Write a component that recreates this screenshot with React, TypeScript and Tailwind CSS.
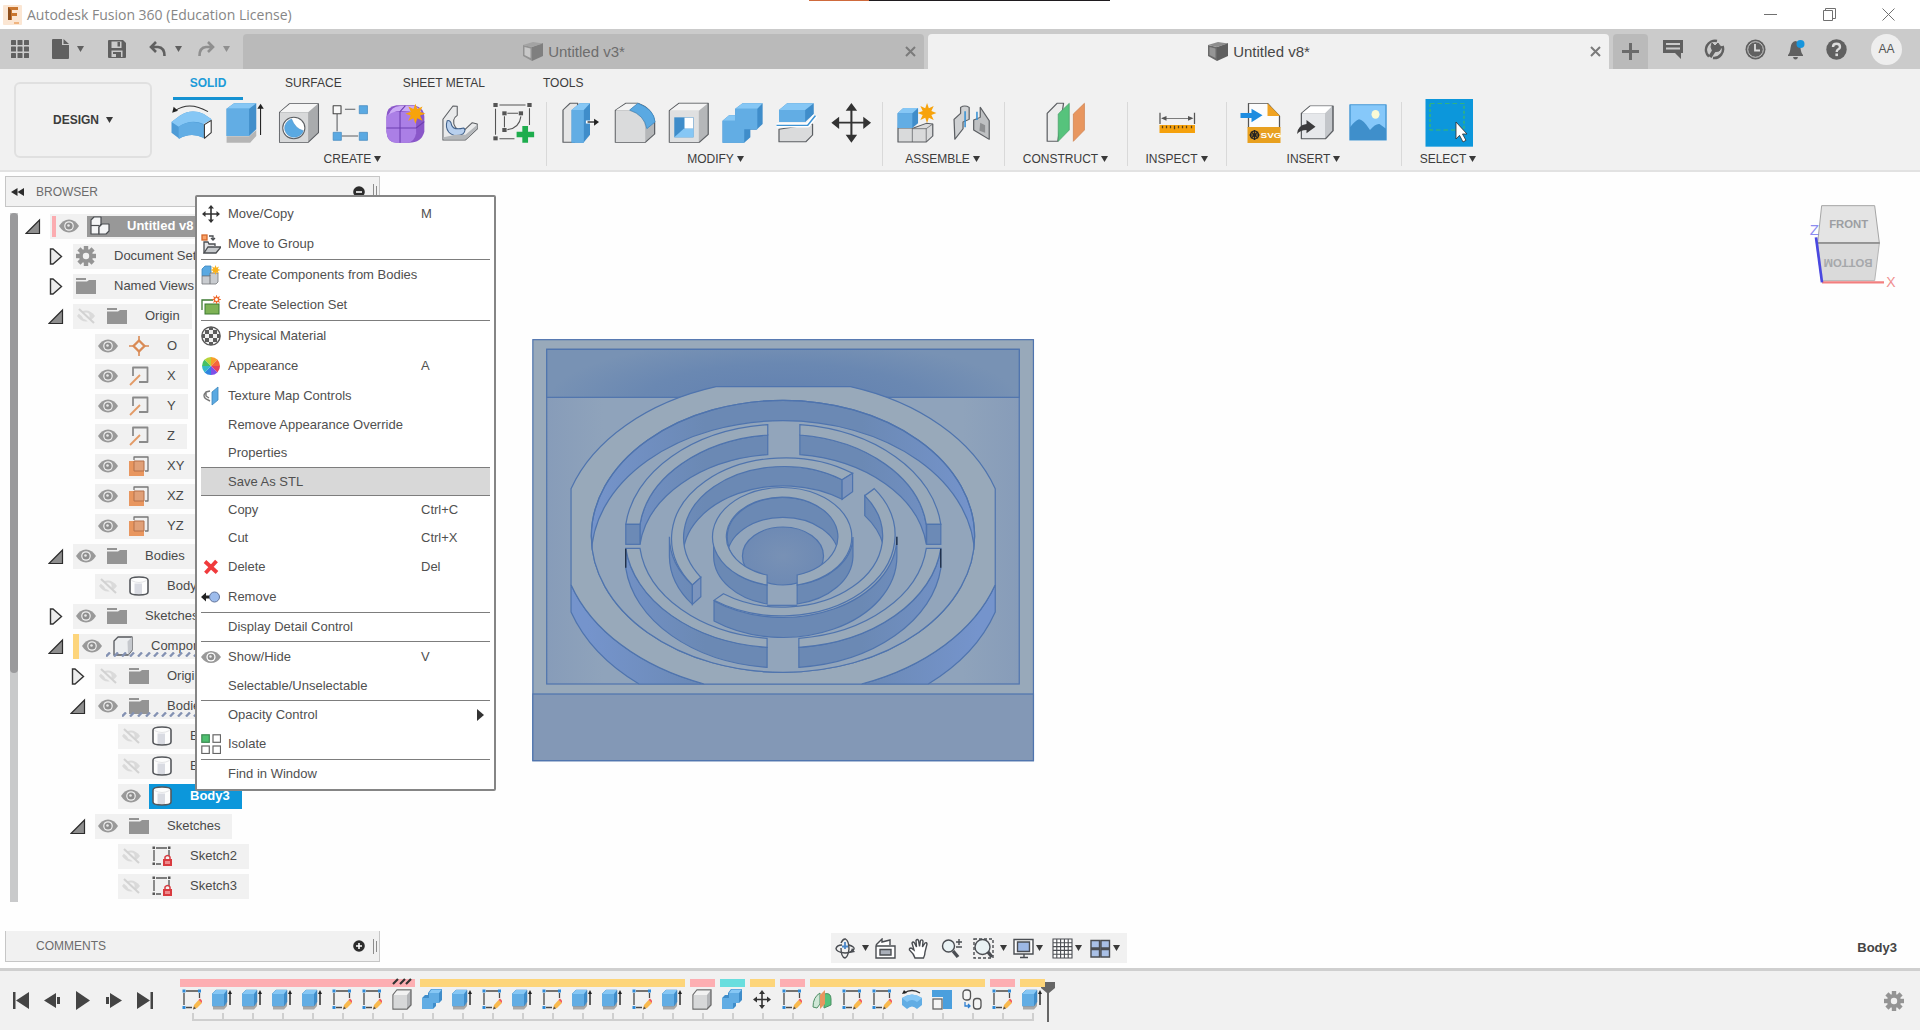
import type { ReactNode } from "react";

const ARIAL = "font-['Liberation_Sans',Arial,sans-serif]";

function Caret({ className = "text-[#3a3a3a]" }: { className?: string }) {
  return (
    <svg viewBox="0 0 7 6" className={`h-[6px] w-[7px] shrink-0 ${className}`} aria-hidden="true">
      <path d="M0 0H7L3.500 6Z" fill="currentColor" />
    </svg>
  );
}

/* ---------- title bar ---------- */

function TitleBar() {
  return (
    <header className="relative flex h-[29px] items-center bg-white pl-[3px]">
      <div className="absolute left-[809px] top-0 flex h-px w-[301px]">
        <span className="w-[60px] bg-[#cf6a3c]" />
        <span className="flex-1 bg-[#1f1b1f]" />
      </div>
      <svg viewBox="0 0 19 20" className="h-5 w-[19px]" aria-hidden="true">
        <rect width="19" height="20" rx="1" fill="#fbe6d3" />
        <path d="M5 2H15V5H9V8H14V11H9V15H5Z" fill="#c9762f" />
        <path d="M5 2L8 5V15H5Z" fill="#8f4f1d" />
        <path d="M11 17H16V19H11Z" fill="#f0b47f" />
      </svg>
      <h1 className="ml-[5px] font-['Open_Sans','Noto_Sans',sans-serif] text-[14px] leading-5 font-normal text-[#868686]">
        Autodesk Fusion 360 (Education License)
      </h1>
      <div className="ml-auto flex items-center gap-[46px] pr-[25px] text-[#707070]">
        <button aria-label="Minimize" className="h-[13px] w-[13px]">
          <svg viewBox="0 0 13 13" className="h-[13px] w-[13px]"><path d="M0 6.500H13" stroke="currentColor" /></svg>
        </button>
        <button aria-label="Restore" className="h-[13px] w-[13px]">
          <svg viewBox="0 0 13 13" className="h-[13px] w-[13px]" fill="none" stroke="currentColor">
            <path d="M.5 2.500H9.500V12.500H.5ZM2.500 2.500V.5H12.500V10.500H9.500" />
          </svg>
        </button>
        <button aria-label="Close window" className="h-[13px] w-[13px]">
          <svg viewBox="0 0 13 13" className="h-[13px] w-[13px]" stroke="currentColor"><path d="M.5 .5L12.500 12.500M12.500 .5L.5 12.500" /></svg>
        </button>
      </div>
    </header>
  );
}

/* ---------- application bar ---------- */

function TabCube({ muted }: { muted?: boolean }) {
  return (
    <svg viewBox="0 0 20 19" className="h-[19px] w-5" aria-hidden="true">
      <path d="M9 5L20 1V14L9 19Z" fill={muted ? "#7f7f7f" : "#5f5f5f"} />
      <path d="M0 3L9 5V19L0 14Z" fill={muted ? "#929292" : "#6a6a6a"} />
      <path d="M1.500 5L7.500 6.500V16L1.500 13Z" fill={muted ? "#c8c8c8" : "#959595"} />
      <path d="M0 3L10 0L20 1.500L9 5Z" fill={muted ? "#a3a3a3" : "#8d8d8d"} />
    </svg>
  );
}

function CloseX() {
  return (
    <svg viewBox="0 0 11 11" className="h-[11px] w-[11px]" stroke="#7b7b7b" strokeWidth="2">
      <path d="M1 1L10 10M10 1L1 10" />
    </svg>
  );
}

function AppBar() {
  return (
    <div className="flex h-10 bg-[#cbcbcb]">
      <div className="flex w-[243px] shrink-0 items-center pl-[11px] text-[#606060]">
        <button aria-label="Data panel">
          <svg viewBox="0 0 18 18" className="h-[18px] w-[18px]" fill="currentColor">
            {[0, 6.5, 13].map((y) => [0, 6.5, 13].map((x) => <rect key={`${x}-${y}`} x={x} y={y} width="5" height="5" rx=".6" />))}
          </svg>
        </button>
        <button aria-label="File" className="ml-[23px] flex items-center gap-2">
          <svg viewBox="0 0 17 20" className="h-5 w-[17px]" fill="currentColor">
            <path d="M0 1Q0 0 1 0H10V6H17V19Q17 20 16 20H1Q0 20 0 19ZM11.500 0L17 5H11.500Z" />
          </svg>
          <Caret className="text-[#606060]" />
        </button>
        <button aria-label="Save" className="ml-6">
          <svg viewBox="0 0 18 18" className="h-[18px] w-[18px]">
            <path d="M0 1Q0 0 1 0H15L18 3V17Q18 18 17 18H1Q0 18 0 17Z" fill="#606060" />
            <path d="M3.500 1.500H13.500V8H3.500ZM3.500 10.500H14.500V17H3.500Z" fill="#cbcbcb" />
            <path d="M9.500 2V6.500H12V2ZM5 12H13V17H8V14H5Z" fill="#606060" />
          </svg>
        </button>
        <button aria-label="Undo" className="ml-[23px] flex items-center gap-[9px]">
          <svg viewBox="0 0 17 17" className="h-[17px] w-[17px]" fill="none" stroke="currentColor" strokeWidth="2.600">
            <path d="M7 1L2 6L7 11M2 6H9Q15.500 6.500 15.500 15" />
          </svg>
          <Caret className="text-[#606060]" />
        </button>
        <button aria-label="Redo" className="ml-4 flex items-center gap-2 text-[#8f8f8f]">
          <svg viewBox="0 0 17 17" className="h-[17px] w-[17px]" fill="none" stroke="currentColor" strokeWidth="2.600">
            <path d="M10 1L15 6L10 11M15 6H8Q1.500 6.500 1.500 15" />
          </svg>
          <Caret className="text-[#8f8f8f]" />
        </button>
      </div>
      <div className="mt-[5px] flex flex-1 gap-1 text-[15px] leading-5">
        <div className="flex flex-1 items-center rounded-t bg-[#bababa] pr-2 text-[#6d6d6d]">
          <button className="flex flex-1 items-center justify-center gap-[5px]">
            <TabCube muted />
            Untitled v3*
          </button>
          <button aria-label="Close Untitled v3"><CloseX /></button>
        </div>
        <div className="flex flex-1 items-center rounded-t bg-[#f1f1f1] pr-2 text-[#474747]">
          <button className="flex flex-1 items-center justify-center gap-[5px]">
            <TabCube />
            Untitled v8*
          </button>
          <button aria-label="Close Untitled v8"><CloseX /></button>
        </div>
      </div>
      <button aria-label="New tab" className="mt-[5px] ml-1 grid w-[35px] place-items-center rounded-t bg-[#bababa]">
        <svg viewBox="0 0 17 17" className="h-[17px] w-[17px]" stroke="#6b6b6b" strokeWidth="3"><path d="M8.500 0V17M0 8.500H17" /></svg>
      </button>
      <div className="flex items-center gap-5 pr-[18px] pl-[14px] text-[#606060]">
        <button aria-label="Notes">
          <svg viewBox="0 0 22 20" className="h-5 w-[22px]"><path d="M1 1H21V14H19V20L13 14H1Z" fill="currentColor" /><path d="M4 5H18M4 9.500H18" stroke="#cbcbcb" strokeWidth="1.800" /></svg>
        </button>
        <button aria-label="Extensions">
          <svg viewBox="0 0 21 21" className="h-[21px] w-[21px]" fill="none" stroke="currentColor">
            <path d="M13 2A9 9 0 0 0 5 17.500M9 19A9 9 0 0 0 18.500 7" strokeWidth="2.500" />
            <path d="M6 18L11 10" strokeWidth="3.500" />
            <path d="M7 8L8 4L11 7L14 4L16 7L18 8L15 12L9 13Z" fill="currentColor" strokeWidth="1" />
          </svg>
        </button>
        <button aria-label="Job status">
          <svg viewBox="0 0 21 21" className="h-[21px] w-[21px]">
            <circle cx="10.500" cy="10.500" r="10" fill="currentColor" />
            <circle cx="10.500" cy="10.500" r="7.800" fill="none" stroke="#cbcbcb" />
            <path d="M10 5V11.500H15" fill="none" stroke="#dcdcdc" strokeWidth="1.800" />
          </svg>
        </button>
        <button aria-label="Notifications">
          <svg viewBox="0 0 20 21" className="h-[21px] w-5">
            <path d="M2 16Q4 14 4.500 9Q5 3 9.500 2Q14 3 14.500 9Q15 14 17 16V17H2ZM7 18H12Q11.500 20.500 9.500 20.500T7 18Z" fill="currentColor" />
            <circle cx="14.500" cy="5" r="4" fill="#1795dc" />
          </svg>
        </button>
        <button aria-label="Help">
          <svg viewBox="0 0 21 21" className="h-[21px] w-[21px]">
            <circle cx="10.500" cy="10.500" r="10.200" fill="currentColor" />
            <path d="M7 8Q7 4.800 10.500 4.800T14 8Q14 9.500 12 10.500Q10.700 11.300 10.700 13" fill="none" stroke="#dcdcdc" strokeWidth="2.400" />
            <rect x="9.400" y="14.500" width="2.600" height="2.600" fill="#dcdcdc" />
          </svg>
        </button>
        <button aria-label="Account" className="ml-1 grid h-[31px] w-[31px] place-items-center rounded-full bg-[#eee] text-[12px] leading-4 text-[#555]">
          AA
        </button>
      </div>
    </div>
  );
}

/* ---------- ribbon ---------- */

const EDGE = "#5c5f63";

function Tool({ label, vb, children }: { label: string; vb: string; children: ReactNode }) {
  return (
    <button aria-label={label} className="h-12 w-[54px] shrink-0">
      <svg viewBox={vb} preserveAspectRatio="none" className="h-12 w-[54px]" strokeLinejoin="round">
        {children}
      </svg>
    </button>
  );
}

function Star({ x, y, rx = 28, ry = 30, fill = "#f7a30b" }: { x: number; y: number; rx?: number; ry?: number; fill?: string }) {
  const pts = Array.from({ length: 16 }, (_, i) => {
    const k = i % 2 ? 0.5 : 1;
    const a = (i * Math.PI) / 8;
    return `${(x + rx * k * Math.sin(a)).toFixed(1)},${(y - ry * k * Math.cos(a)).toFixed(1)}`;
  }).join(" ");
  return <polygon points={pts} fill={fill} />;
}

const createTools = (
  <>
    <Tool label="Revolve" vb="459 297 151 144">
      <path d="M480 366L502 348Q535 325 570 342L592 358L570 370L570 414Q535 395 502 416L480 398Z" fill="#4d9bd6" />
      <path d="M480 366L502 348Q535 325 570 342L592 358L570 372Q535 355 500 380Z" fill="#86c7f5" />
      <path d="M500 380Q535 356 570 374V413Q535 395 500 416Z" fill="#62ade4" />
      <path d="M572 374L591 361V398L572 415Z" fill="#fff" stroke="#333" strokeWidth="3" />
      <path d="M490 332Q530 302 582 335" fill="none" stroke="#333" strokeWidth="3" />
      <path d="M482 338L486 320L498 332Z" fill="#222" />
    </Tool>
    <Tool label="Extrude" vb="610 297 151 144">
      <path d="M634 409H697L717 390V408L700 428H634Z" fill="#b5b5b5" />
      <path d="M634 326L655 310H717V388L697 408H634Z" fill="#418fcb" />
      <path d="M634 326L655 310H717L697 326Z" fill="#86c7f5" />
      <path d="M634 326H697V408H634Z" fill="#62ade4" />
      <path d="M729 405V318" stroke="#222" strokeWidth="3" />
      <path d="M720 326L729 311L738 326Z" fill="#222" />
    </Tool>
    <Tool label="Hole" vb="761 297 151 144">
      <path d="M782 337L810 311H891V398L862 427H782Z" fill="#a9abad" stroke={EDGE} strokeWidth="3" />
      <path d="M783 337L811 312H889L862 337Z" fill="#f6f6f6" />
      <path d="M783 338H862V426H783Z" fill="#d8d9da" />
      <ellipse cx="822" cy="384" rx="31" ry="32" fill="#fff" stroke={EDGE} strokeWidth="3" />
      <path d="M816 357A27 28 0 1 0 849 392Q826 386 816 357Z" fill="#5aa9e2" stroke="#3b7fb5" />
    </Tool>
    <Tool label="Pattern" vb="912 297 151 144">
      <path d="M965 328H994M956 408H1002M943 342V394" fill="none" stroke={EDGE} strokeWidth="3" />
      <rect x="932" y="317" width="22" height="24" fill="#f8f8f8" stroke="#444" strokeWidth="3" />
      <rect x="1005" y="317" width="23" height="24" fill="#5aa9e2" stroke="#3e86bd" strokeWidth="2" />
      <rect x="932" y="397" width="23" height="24" fill="#5aa9e2" stroke="#3e86bd" strokeWidth="2" />
      <rect x="1005" y="397" width="23" height="24" fill="#5aa9e2" stroke="#3e86bd" strokeWidth="2" />
    </Tool>
    <Tool label="Create form" vb="1064 297 151 144">
      <path d="M1082 350Q1082 320 1110 316H1160Q1188 325 1188 350V395Q1180 428 1145 428H1110Q1084 428 1082 395Z" fill="#8a57c9" />
      <path d="M1082 352Q1085 335 1110 335H1140Q1165 335 1165 360V400Q1160 428 1140 428H1108Q1084 426 1082 395Z" fill="#ab7fe6" />
      <path d="M1088 345Q1095 320 1120 318H1160Q1175 325 1180 335L1160 340Q1150 332 1120 333Q1100 334 1088 345Z" fill="#cbaaf5" />
      <path d="M1082 384H1165L1188 365M1120 428V335L1135 317" fill="none" stroke="#6d3eb0" strokeWidth="3" />
      <Star x={1163} y={341} />
    </Tool>
    <Tool label="Flange" vb="1215 297 151 144">
      <path d="M1240 358L1268 318L1280 319V346Q1262 358 1275 382Q1290 400 1302 388L1322 368L1336 372V387L1303 420H1240Z" fill="#e9eaeb" stroke={EDGE} strokeWidth="3" />
      <path d="M1252 362Q1262 360 1264 375Q1270 392 1298 384Q1306 390 1296 402Q1272 414 1256 396Q1246 382 1252 362Z" fill="#b8d0ee" stroke="#41618b" strokeWidth="3" />
      <path d="M1240 418H1303L1336 385V374L1303 404H1275L1242 412Z" fill="#b4b7ba" />
    </Tool>
    <Tool label="Create sketch" vb="1366 297 151 144">
      <path d="M1398 315H1471M1482 325V375M1387 326V404M1398 416H1440" fill="none" stroke="#555" strokeWidth="3" />
      <path d="M1420 340H1450M1412 349V382M1458 349Q1454 384 1420 389" fill="none" stroke="#555" strokeWidth="3" />
      {[[1387, 315], [1482, 315], [1387, 415], [1412, 340], [1458, 340], [1412, 390]].map(([x, y]) => (
        <rect key={`${x}-${y}`} x={x - 6} y={y - 6} width="12" height="12" fill="#555" />
      ))}
      <path d="M1462 378H1478V395H1495V412H1478V428H1462V412H1446V395H1462Z" fill="#1ead4d" />
    </Tool>
  </>
);

const modifyTools = (
  <>
    <Tool label="Press pull" vb="34 297 132 144">
      <path d="M56 330L73 310H92L84 427H56Z" fill="#e6e6e6" stroke={EDGE} strokeWidth="3" />
      <path d="M77 330L97 310H122V404L106 428H77Z" fill="#3f8dca" />
      <path d="M77 330H107V428H77Z" fill="#62ade4" />
      <path d="M77 330L97 310H122L107 330Z" fill="#86c7f5" />
      <path d="M112 366H136" stroke="#fff" strokeWidth="9" />
      <path d="M116 366H136" stroke="#222" strokeWidth="4" />
      <path d="M132 356L144 366L132 377Z" fill="#222" />
    </Tool>
    <Tool label="Fillet" vb="167 297 132 144">
      <path d="M185 331L210 310H240Q275 325 281 365V402L258 427H185Z" fill="#b5b7b9" stroke={EDGE} strokeWidth="3" />
      <path d="M186 331L211 311H242Q225 320 220 331Z" fill="#f4f4f4" />
      <path d="M186 332H218Q258 345 258 388V426H186Z" fill="#dadbdc" />
      <path d="M220 330L240 310Q280 328 282 366L262 386Q256 345 220 330Z" fill="#5aa9e2" stroke="#3e86bd" strokeWidth="2" />
    </Tool>
    <Tool label="Shell" vb="299 297 132 144">
      <path d="M317 332L340 310H412V403L390 427H317Z" fill="#b5b7b9" stroke={EDGE} strokeWidth="3" />
      <path d="M318 332L341 311H410L389 332Z" fill="#f4f4f4" />
      <path d="M318 333H389V426H318Z" fill="#dfe0e1" />
      <path d="M329 352H376V412H329Z" fill="#3f8dca" />
      <path d="M354 353H375V386H354Z" fill="#fff" />
      <path d="M329 412L352 386H376V412Z" fill="#86c7f5" />
    </Tool>
    <Tool label="Combine" vb="431 297 132 144">
      <path d="M447 362L463 346H478V326L496 310H545V372L530 389H515V412L500 428H447Z" fill="#3f8dca" />
      <path d="M447 362H478V326H532V388H500V428H447Z" fill="#62ade4" />
      <path d="M447 362L463 346H478V362ZM478 326L496 310H545L532 326Z" fill="#86c7f5" />
    </Tool>
    <Tool label="Split body" vb="564 297 132 144">
      <path d="M586 330L606 310H671V342L650 366H586Z" fill="#3f8dca" />
      <path d="M586 330H650V366H586Z" fill="#62ade4" />
      <path d="M586 330L606 310H671L650 330Z" fill="#86c7f5" />
      <path d="M586 388L668 372V405L652 425H586Z" fill="#dadbdc" stroke={EDGE} strokeWidth="3" />
      <path d="M580 376H656L675 347" fill="none" stroke="#fff" strokeWidth="13" />
      <path d="M580 376H656L675 347" fill="none" stroke="#3f94d4" strokeWidth="4" />
    </Tool>
    <Tool label="Move" vb="693 297 132 144">
      <path d="M760 320V418M722 368H797" stroke="#333" strokeWidth="5" />
      <path d="M746 332L760 309L774 332ZM746 404L760 428L774 404ZM730 350L711 368L730 387ZM789 350L808 368L789 387Z" fill="#333" />
    </Tool>
  </>
);

const assembleTools = (
  <>
    <Tool label="New component" vb="855 297 132 144">
      <path d="M877 384V426H946L962 408V372L946 370L915 384Z" fill="#d9dadb" stroke={EDGE} strokeWidth="3" />
      <path d="M912 384V426M912 386H946V426M946 386L962 372" fill="none" stroke={EDGE} strokeWidth="2" />
      <path d="M876 340L890 324H926V370L912 384H876Z" fill="#3f8dca" />
      <path d="M876 340H912V384H876Z" fill="#62ade4" />
      <path d="M876 340L890 324H926L912 340Z" fill="#86c7f5" />
      <Star x={948} y={339} rx={23} />
    </Tool>
    <Tool label="Joint" vb="987 297 132 144">
      <path d="M1014 358L1030 340V322Q1040 314 1051 322V358L1036 366V386L1016 418Z" fill="#cfd1d3" stroke={EDGE} strokeWidth="3" />
      <path d="M1100 362L1078 322V352L1062 360V390L1100 418Z" fill="#bfc1c3" stroke={EDGE} strokeWidth="3" />
      <path d="M1078 368L1090 376V398L1076 392Z" fill="#8d8f91" />
      <path d="M1041 334V382M1070 335V360" stroke="#3f94d4" strokeWidth="4" />
    </Tool>
  </>
);

const constructTools = (
  <Tool label="Offset plane" vb="1224 297 132 144">
    <path d="M1244 340L1268 310H1284L1270 424H1244Z" fill="#ececec" stroke={EDGE} strokeWidth="3" />
    <path d="M1271 342L1298 310V390L1271 424Z" fill="#56c37c" stroke="#4aa169" strokeWidth="2" />
    <path d="M1308 342L1335 310V390L1308 424Z" fill="#e8965f" stroke="#cf8250" strokeWidth="2" />
  </Tool>
);

const inspectTools = (
  <Tool label="Measure" vb="21 297 108 144">
    <path d="M41 338V372M110 338V372M46 355H105" stroke="#555" strokeWidth="2.500" />
    <path d="M43 355L54 348V362ZM108 355L97 348V362Z" fill="#555" />
    <rect x="40" y="375" width="71" height="24" fill="#f5a10c" />
    <path d="M46 377V385M54 377V385M62 377V385M70 377V388M78 377V385M86 377V385M94 377V385M104 377V385" stroke="#59421a" strokeWidth="2.500" />
  </Tool>
);

const insertTools = (
  <>
    <Tool label="Insert SVG" vb="189 297 108 144">
      <path d="M220 310H258L282 348V384H220Z" fill="#fcfcfc" stroke="#555" strokeWidth="2.500" />
      <path d="M258 310L283 348H258Z" fill="#f0a322" />
      <rect x="218" y="381" width="66" height="48" fill="#e8a01f" />
      <path d="M204 339H226V326L248 346L226 367V354H204Z" fill="#1e8ce0" />
      <g stroke="#222" strokeWidth="3" fill="none">
        <ellipse cx="232" cy="405" rx="8" ry="12" />
        <path d="M232 390V420M222 405H242M225 395L239 415M239 395L225 415" />
      </g>
      <text x="244" y="413" fontFamily="Liberation Sans, sans-serif" fontWeight="bold" fontSize="20" fill="#fff">SVG</text>
    </Tool>
    <Tool label="Derive" vb="297 297 108 144">
      <path d="M326 340L343 318H389V392L374 416H326Z" fill="#c3c6ca" stroke={EDGE} strokeWidth="3" />
      <path d="M327 340L344 319H387L373 340Z" fill="#fff" />
      <path d="M327 341H373V414H327Z" fill="#e6e8eb" />
      <path d="M317 402Q318 376 336 372V360L354 380L336 400V390Q324 390 317 402Z" fill="#3b3b3d" />
    </Tool>
    <Tool label="Canvas" vb="405 297 108 144">
      <rect x="423" y="314" width="72" height="106" fill="#86c8fa" stroke="#4b9bd6" strokeWidth="3" />
      <path d="M423 382Q433 362 441 358Q449 358 463 390Q474 370 482 372L495 386V420H423Z" fill="#3f8fcb" />
      <ellipse cx="474" cy="343" rx="8" ry="13" fill="#fbfbd6" />
    </Tool>
  </>
);

const selectTools = (
  <Tool label="Select" vb="566 297 108 144">
    <rect x="573" y="297" width="95" height="143" fill="#0c97db" />
    <rect x="582" y="310" width="68" height="80" fill="none" stroke="#3dba66" strokeWidth="2.500" strokeDasharray="9 6" />
    <path d="M634 366V417L641 406L648 426L654 421L647 402H656Z" fill="#fff" stroke="#333" strokeWidth="2" />
  </Tool>
);

function Group({ name, className, tools }: { name: string; className: string; tools: ReactNode }) {
  return (
    <section className={`flex h-[70px] flex-col items-center ${className}`}>
      <div className="flex h-12">{tools}</div>
      <button className="mt-1 flex items-center gap-[3px] pr-px text-[12px] leading-4">
        {name}
        <Caret />
      </button>
    </section>
  );
}

function Divider() {
  return <span className="mt-[3px] h-16 w-px shrink-0 bg-[#d9d9d9]" />;
}

function Ribbon() {
  return (
    <div className="flex h-[103px] shrink-0 border-b-2 border-[#e2e2e2] bg-[#f1f1f1] text-[#3c3c3c]">
      <button className="mt-[13px] ml-[14px] flex h-[76px] w-[138px] shrink-0 items-center justify-center gap-[7px] rounded-md border-2 border-[#e0e0e0] text-[12px] leading-4 font-bold">
        DESIGN
        <Caret />
      </button>
      <div className="ml-3">
        <nav className="flex h-[30px] text-[12px] leading-4">
          <button className="ml-[9px] h-[31px] w-[70px] border-b-3 border-[#1592d2] font-bold text-[#1c9bd8]">SOLID</button>
          <button className="ml-[42px] h-[28px]">SURFACE</button>
          <button className="ml-[61px] h-[28px]">SHEET METAL</button>
          <button className="ml-[58px] h-[28px]">TOOLS</button>
        </nav>
        <div className="flex">
          <Group name="CREATE" className="w-[382px] pr-1" tools={createTools} />
          <Divider />
          <Group name="MODIFY" className="w-[335px] pr-1 pl-[7px]" tools={modifyTools} />
          <Divider />
          <Group name="ASSEMBLE" className="w-[121px] pr-px" tools={assembleTools} />
          <Divider />
          <Group name="CONSTRUCT" className="w-[122px]" tools={constructTools} />
          <Divider />
          <Group name="INSPECT" className="w-[98px]" tools={inspectTools} />
          <Divider />
          <Group name="INSERT" className="w-[174px]" tools={insertTools} />
          <Divider />
          <Group name="SELECT" className="w-[93px]" tools={selectTools} />
        </div>
      </div>
    </div>
  );
}

/* ---------- browser tree ---------- */

function Eye() {
  return (
    <svg viewBox="0 0 20 14" className="h-[14px] w-5 shrink-0" aria-hidden="true">
      <path d="M0 7Q4 .5 10 .5T20 7Q16 13.500 10 13.500T0 7Z" fill="#999" />
      <circle cx="10" cy="7" r="4.800" fill="#f1f1f1" />
      <circle cx="10" cy="7" r="3.600" fill="#8e8e8e" />
      <circle cx="9.500" cy="6.500" r="1.300" fill="#e8e8e8" />
    </svg>
  );
}

function EyeOff() {
  return (
    <svg viewBox="0 0 20 16" className="h-4 w-5 shrink-0" aria-hidden="true">
      <path d="M1 8Q5 2.500 10 2.500T19 8Q15 13.500 10 13.500T1 8Z" fill="#dadada" />
      <circle cx="10" cy="8" r="3.600" fill="#f1f1f1" />
      <path d="M1 2L17 16" stroke="#f1f1f1" strokeWidth="3" />
      <path d="M3 1L18 15" stroke="#d2d2d2" strokeWidth="2" />
    </svg>
  );
}

type IconName = "folder" | "gear" | "assembly" | "origin" | "axis" | "plane" | "body" | "cube" | "sketch";

function Gear() {
  return (
    <svg viewBox="0 0 20 20" className="h-5 w-5 shrink-0" aria-hidden="true">
      <g fill="#949494">
        {[0, 45, 90, 135].map((a) => (
          <rect key={a} x="7.800" y="0" width="4.400" height="20" transform={`rotate(${a} 10 10)`} />
        ))}
        <circle cx="10" cy="10" r="7" />
      </g>
      <circle cx="10" cy="10" r="3.200" fill="#f1f1f1" />
    </svg>
  );
}

function TreeIcon({ name }: { name: IconName }) {
  if (name === "gear") return <Gear />;
  return (
    <svg viewBox="0 0 20 20" className="h-5 w-5 shrink-0" aria-hidden="true" strokeLinejoin="round">
      {name === "folder" && <path d="M0 2H10V4H0ZM0 5.500H11L13 4H20V18H0Z" fill="#949494" />}
      {name === "assembly" && (
        <g fill="#f4f5f6" stroke="#4b4e52" strokeWidth="1.200">
          <path d="M1 4L4 1H11V8L9 11V18H1Z" />
          <path d="M1 9.500H9" />
          <path d="M9 11L12 8H19V15L16 18H9Z" />
        </g>
      )}
      {name === "origin" && (
        <g stroke="#d98a55" fill="none">
          <path d="M10 0V20M0 10H20" strokeWidth="1.600" />
          <path d="M10 4.500L15.500 10L10 15.500L4.500 10Z" strokeWidth="2.400" fill="#f1f1f1" />
        </g>
      )}
      {name === "axis" && (
        <g fill="none">
          <path d="M4 10V1.500H18.500V16H10" stroke="#8a8a8a" strokeWidth="1.800" />
          <path d="M1 19L11 9" stroke="#e39a66" strokeWidth="1.800" />
        </g>
      )}
      {name === "plane" && (
        <g>
          <rect y="5" width="15" height="15" fill="#e8965f" />
          <path d="M5 4V1H19V15H16" fill="none" stroke="#777" strokeWidth="1.300" />
          <path d="M5 5H15V15H5Z" fill="#e0a078" stroke="#b5704a" />
        </g>
      )}
      {name === "body" && (
        <g>
          <path d="M1 4Q1 1 10 1T19 4V16Q19 19 10 19T1 16Z" fill="#fdfdfd" stroke="#55585c" strokeWidth="1.600" />
          <path d="M5.500 7.500H13V18H5.500Z" fill="#d9dbe2" />
          <path d="M2.500 4.500Q10 8.500 17.500 4.500" fill="none" stroke="#e3e4e6" />
        </g>
      )}
      {name === "cube" && (
        <g stroke="#55585c" strokeWidth="1.300">
          <path d="M1 5L5 1H19V14L15 19H1Z" fill="#eceef0" />
          <path d="M14.500 5.500L19 1V14L15 19Z" fill="#c5c8cd" stroke="none" />
        </g>
      )}
      {name === "sketch" && (
        <g>
          <path d="M4 2H15M2 4V15M4 18H9M17 4V10" stroke="#555" strokeWidth="1.300" />
          <path d="M.5 .5H3V3H.5ZM16 .5H18.500V3H16ZM.5 16.500H3V19H.5Z" fill="#555" />
          <rect x="11" y="13" width="9" height="7" fill="#d83a3f" />
          <path d="M13 13V11Q15.500 8 18 11V13" fill="none" stroke="#d83a3f" strokeWidth="1.500" />
          <path d="M13 15H18V18H13Z" fill="#ee8a8c" />
        </g>
      )}
    </svg>
  );
}

type Row = {
  level: 0 | 1 | 2 | 3;
  arrow?: "open" | "closed";
  eye?: "on" | "off";
  icon: IconName;
  text: string;
  bar?: "pink" | "yellow";
  state?: "root" | "selected";
  hatch?: boolean;
};

const rows: Row[] = [
  { level: 0, arrow: "open", eye: "on", icon: "assembly", text: "Untitled v8", bar: "pink", state: "root" },
  { level: 1, arrow: "closed", icon: "gear", text: "Document Settings" },
  { level: 1, arrow: "closed", icon: "folder", text: "Named Views" },
  { level: 1, arrow: "open", eye: "off", icon: "folder", text: "Origin" },
  { level: 2, eye: "on", icon: "origin", text: "O" },
  { level: 2, eye: "on", icon: "axis", text: "X" },
  { level: 2, eye: "on", icon: "axis", text: "Y" },
  { level: 2, eye: "on", icon: "axis", text: "Z" },
  { level: 2, eye: "on", icon: "plane", text: "XY" },
  { level: 2, eye: "on", icon: "plane", text: "XZ" },
  { level: 2, eye: "on", icon: "plane", text: "YZ" },
  { level: 1, arrow: "open", eye: "on", icon: "folder", text: "Bodies" },
  { level: 2, eye: "off", icon: "body", text: "Body1" },
  { level: 1, arrow: "closed", eye: "on", icon: "folder", text: "Sketches" },
  { level: 1, arrow: "open", eye: "on", icon: "cube", text: "Component1:1", bar: "yellow", hatch: true },
  { level: 2, arrow: "closed", eye: "off", icon: "folder", text: "Origin" },
  { level: 2, arrow: "open", eye: "on", icon: "folder", text: "Bodies", hatch: true },
  { level: 3, eye: "off", icon: "body", text: "Body1" },
  { level: 3, eye: "off", icon: "body", text: "Body2" },
  { level: 3, eye: "on", icon: "body", text: "Body3", state: "selected" },
  { level: 2, arrow: "open", eye: "on", icon: "folder", text: "Sketches" },
  { level: 3, eye: "off", icon: "sketch", text: "Sketch2" },
  { level: 3, eye: "off", icon: "sketch", text: "Sketch3" },
];

const indent = ["pl-[7px]", "pl-[30px]", "pl-[52px]", "pl-[75px]"];

function Arrow({ kind }: { kind?: "open" | "closed" }) {
  if (!kind) return <span className="w-[25px] shrink-0" />;
  return (
    <button aria-label={kind === "open" ? "Collapse" : "Expand"} className="w-[25px] shrink-0">
      <svg viewBox="0 0 16 17" className="h-[17px] w-4">
        {kind === "open" ? (
          <path d="M1 15.500L14.500 2V15.500Z" fill="#8e8e8e" stroke="#2d2d2d" strokeWidth="1.200" />
        ) : (
          <path d="M2.500 1V16H5L13.500 8.500L5 1Z" fill="#ececec" stroke="#333" strokeWidth="1.400" />
        )}
      </svg>
    </button>
  );
}

function Hatch() {
  return (
    <svg className="absolute bottom-[2px] left-[-4px] h-[5px] w-[110px]" viewBox="0 0 110 5" aria-hidden="true">
      <path d={Array.from({ length: 14 }, (_, i) => `M${i * 8} 4.500L${i * 8 + 4} .5`).join("")} stroke="#8492b3" strokeWidth="2.400" />
    </svg>
  );
}

function TreeRow({ row }: { row: Row }) {
  const look =
    row.state === "root"
      ? "h-[21px] gap-[17px] bg-[#989898] font-bold text-white"
      : row.state === "selected"
        ? "h-[25px] gap-[18px] bg-[#0c97db] font-bold text-white"
        : "h-[25px] gap-[18px]";
  return (
    <li className={`flex h-[30px] items-center ${indent[row.level]}`}>
      <Arrow kind={row.arrow} />
      <div className="flex h-[25px] items-center bg-[#f1f1f1]">
        {row.bar === "pink" && <span className="ml-[2px] h-[21px] w-1 bg-[#fbacb0]" />}
        {row.bar === "yellow" && <span className="h-[25px] w-[6px] bg-[#fdd57c]" />}
        {row.eye && (
          <button aria-label={`Toggle ${row.text}`} className="w-[31px] pl-[3px]">
            {row.eye === "on" ? <Eye /> : <EyeOff />}
          </button>
        )}
        <button className={`relative flex items-center pr-3 pl-[3px] whitespace-nowrap ${look}`}>
          <TreeIcon name={row.icon} />
          {row.text}
          {row.hatch && <Hatch />}
        </button>
      </div>
    </li>
  );
}

function PanelGrip() {
  return (
    <svg viewBox="0 0 4 15" className="ml-2 h-[15px] w-1" stroke="#8c8c8c" aria-hidden="true">
      <path d="M.5 0V15M3.500 2V13" />
    </svg>
  );
}

function RoundSign({ plus }: { plus?: boolean }) {
  return (
    <svg viewBox="0 0 12 12" className="h-3 w-3">
      <circle cx="6" cy="6" r="5.800" fill="#2c2c2c" />
      <path d={plus ? "M3 6H9M6 3V9" : "M3 6H9"} stroke="#fff" strokeWidth="1.600" />
    </svg>
  );
}

function Browser() {
  return (
    <aside className="flex w-[380px] shrink-0 flex-col pt-1 pl-[5px]">
      <div className="flex h-[31px] items-center border border-[#c6c6c6] bg-[#f1f1f1] pr-[2px] pl-[5px]">
        <button aria-label="Hide browser">
          <svg viewBox="0 0 13 8" className="h-2 w-[13px]"><path d="M6.500 0V8L0 4ZM13 0V8L6.500 4Z" fill="#2c2c2c" /></svg>
        </button>
        <h2 className="ml-3 text-[12px] leading-4 text-[#6c6c6c]">BROWSER</h2>
        <button aria-label="Collapse all" className="ml-auto"><RoundSign /></button>
        <PanelGrip />
      </div>
      <div className="mt-1 flex pl-[5px]">
        <div className="mt-[2px] h-[689px] w-2 shrink-0 bg-[#c9cacb]">
          <div className="h-[460px] rounded bg-[#9a9a9c]" />
        </div>
        <ul className="text-[13px] leading-4 text-[#4a4a4a]">
          {rows.map((r, i) => (
            <TreeRow key={i} row={r} />
          ))}
        </ul>
      </div>
    </aside>
  );
}

/* ---------- context menu ---------- */

type Item = { text: string; key?: string; icon?: ReactNode; active?: boolean; sub?: boolean } | "line";

const wheel = ["#f6a02a", "#f4683a", "#e8415a", "#7d4fe8", "#2f86e0", "#35b8c8", "#45c065", "#b8d43c"];

const menu: Item[] = [
  {
    text: "Move/Copy",
    key: "M",
    icon: (
      <g>
        <path d="M10 2V18M2 10H18" stroke="#333" strokeWidth="1.600" />
        <path d="M7 4.500L10 1L13 4.500ZM7 15.500L10 19L13 15.500ZM4.500 7L1 10L4.500 13ZM15.500 7L19 10L15.500 13Z" fill="#333" />
      </g>
    ),
  },
  {
    text: "Move to Group",
    icon: (
      <g fill="none" stroke="#4b4e52" strokeWidth="1.300">
        <rect x="1" y="1" width="5" height="5" fill="#f9a36b" stroke="#d5672a" />
        <path d="M8 2H12V5M10 4L12 6L14 4" />
        <path d="M3 19V8H7L8 10H14V12" fill="#e4e5e7" />
        <path d="M3 19L7 13H20L15 19Z" fill="#c7cacd" />
      </g>
    ),
  },
  "line",
  {
    text: "Create Components from Bodies",
    icon: (
      <g>
        <path d="M1 4L4 1H10V11H1Z" fill="#5aa9e2" stroke="#3e86bd" strokeWidth=".8" />
        <path d="M1 11H9V8L17 8V17L15 19H1Z" fill="#c9ccd0" stroke="#74777b" strokeWidth=".8" />
        <path d="M9 10V19" stroke="#74777b" />
        <Star x={14.500} y={5} rx={5} ry={5} fill="#f9b21c" />
      </g>
    ),
  },
  {
    text: "Create Selection Set",
    icon: (
      <g>
        <path d="M1 15V5H12" fill="none" stroke="#3c7a32" strokeWidth="1.300" />
        <rect x="4" y="9" width="14" height="10" fill="#7eb255" stroke="#3c7a32" />
        <Star x={15.500} y={4.500} rx={5} ry={5} fill="#f0682a" />
        <circle cx="15.500" cy="4.500" r="1.500" fill="#fff" />
      </g>
    ),
  },
  "line",
  {
    text: "Physical Material",
    icon: (
      <g>
        <circle cx="10" cy="10" r="9.200" fill="#f0f0f0" stroke="#555" strokeWidth="1.300" />
        <path d="M8 8H12V12H8ZM4 4H8V8H4ZM12 4H16V8H12ZM4 12H8V16H4ZM12 12H16V16H12ZM8 1H12V4H8ZM8 16H12V19H8ZM1 8H4V12H1ZM16 8H19V12H16Z" fill="#5c5c5c" />
      </g>
    ),
  },
  {
    text: "Appearance",
    key: "A",
    icon: (
      <g>
        {wheel.map((c, i) => {
          const a = (i * Math.PI) / 4;
          const b = ((i + 1) * Math.PI) / 4;
          return (
            <path
              key={c}
              fill={c}
              d={`M10 10L${(10 + 9 * Math.sin(a)).toFixed(1)} ${(10 - 9 * Math.cos(a)).toFixed(1)}A9 9 0 0 1 ${(10 + 9 * Math.sin(b)).toFixed(1)} ${(10 - 9 * Math.cos(b)).toFixed(1)}Z`}
            />
          );
        })}
      </g>
    ),
  },
  {
    text: "Texture Map Controls",
    icon: (
      <g>
        <path d="M9 5L5 6Q1 10 5 13L9 15M5 6V10L8 12" fill="none" stroke="#777" strokeWidth="1.400" />
        <path d="M11 6L17 1V14L11 19Z" fill="#5aa9e2" stroke="#3e86bd" strokeWidth=".8" />
      </g>
    ),
  },
  { text: "Remove Appearance Override" },
  { text: "Properties" },
  { text: "Save As STL", active: true },
  { text: "Copy", key: "Ctrl+C" },
  { text: "Cut", key: "Ctrl+X" },
  { text: "Delete", key: "Del", icon: <path d="M4 4.500L16 15.500M15.500 4L4.500 16" stroke="#f03a3c" strokeWidth="3.800" /> },
  {
    text: "Remove",
    icon: (
      <g>
        <path d="M10 8.500H5V5.500L0 10L5 14.500V11.500H10Z" fill="#222" />
        <circle cx="13.500" cy="10" r="5" fill="#9dbcec" stroke="#5f7299" />
      </g>
    ),
  },
  "line",
  { text: "Display Detail Control" },
  "line",
  {
    text: "Show/Hide",
    key: "V",
    icon: (
      <g>
        <path d="M0 10Q4 4 10 4T20 10Q16 16 10 16T0 10Z" fill="#999" />
        <circle cx="10" cy="10" r="4.600" fill="#fff" />
        <circle cx="10" cy="10" r="3.300" fill="#8e8e8e" />
        <circle cx="9.500" cy="9.500" r="1.200" fill="#eee" />
      </g>
    ),
  },
  { text: "Selectable/Unselectable" },
  "line",
  { text: "Opacity Control", sub: true },
  {
    text: "Isolate",
    icon: (
      <g fill="none" stroke="#666" strokeWidth="1.200">
        <rect x=".8" y=".8" width="7.500" height="7.500" fill="#4fc070" stroke="#3d8a53" />
        <rect x="12" y=".8" width="7.500" height="7.500" />
        <rect x=".8" y="12" width="7.500" height="7.500" />
        <rect x="12" y="12" width="7.500" height="7.500" />
      </g>
    ),
  },
  "line",
  { text: "Find in Window" },
];

function ContextMenu() {
  return (
    <div role="menu" className="absolute top-[23px] left-[195px] z-10 w-[301px] rounded-xs border-2 border-[#858585] bg-white px-1 pt-0.5 pb-px text-[13px] leading-4 text-[#505050]">
      {menu.map((m, i) =>
        m === "line" ? (
          <hr key={i} className="border-[#7d7d7d]" />
        ) : (
          <button
            role="menuitem"
            key={i}
            className={`grid w-full grid-cols-[27px_193px_1fr] items-center text-left ${
              m.active ? "h-[29px] border-y border-[#7d7d7d] bg-[#d8d8d8]" : m.icon ? "h-[30px]" : "h-7"
            }`}
          >
            <span className="h-5">
              {m.icon && (
                <svg viewBox="0 0 20 20" className="h-5 w-5" aria-hidden="true">
                  {m.icon}
                </svg>
              )}
            </span>
            <span className="whitespace-nowrap">{m.text}</span>
            {m.key && <span>{m.key}</span>}
            {m.sub && (
              <svg viewBox="0 0 7 12" className="mr-[6px] h-3 w-[7px] justify-self-end" aria-hidden="true">
                <path d="M0 0V12L7 6Z" fill="#333" />
              </svg>
            )}
          </button>
        )
      )}
    </div>
  );
}

/* ---------- model ---------- */

function Model() {
  const line = { stroke: "#4f74ae", strokeWidth: 3.6 };
  const TOP = "#98a9ba";
  const FLOOR = "#92a5bb";
  return (
    <svg viewBox="0 0 1568 1320" preserveAspectRatio="none" className="h-[440px] w-[530px] shrink-0" role="img" aria-label="Maze body">
      <defs>
        <radialGradient id="back" gradientUnits="userSpaceOnUse" cx="0" cy="0" r="1" gradientTransform="translate(778 215) scale(700 190)">
          <stop offset="0" stopColor="#6180b0" />
          <stop offset=".6" stopColor="#6a88b2" />
          <stop offset="1" stopColor="#7892b4" />
        </radialGradient>
        <linearGradient id="wall" gradientUnits="userSpaceOnUse" x1="200" y1="0" x2="1356" y2="0">
          <stop offset="0" stopColor="#7594cc" />
          <stop offset=".3" stopColor="#6b89b4" />
          <stop offset=".7" stopColor="#6b89b4" />
          <stop offset="1" stopColor="#7594cc" />
        </linearGradient>
        <linearGradient id="floor" x1="0" y1="0" x2="1" y2="0">
          <stop offset="0" stopColor="#879cb9" />
          <stop offset=".12" stopColor="#8fa3bb" />
          <stop offset=".88" stopColor="#8fa3bb" />
          <stop offset="1" stopColor="#879cb9" />
        </linearGradient>
        <radialGradient id="hole">
          <stop offset="0" stopColor="#7891b5" />
          <stop offset="1" stopColor="#6e8ab4" />
        </radialGradient>
        <clipPath id="opening"><ellipse cx="778" cy="619" rx="567" ry="408" /></clipPath>
        <clipPath id="core"><ellipse cx="778" cy="621" rx="165" ry="119" /></clipPath>
      </defs>
      <rect x="38" y="29" width="1481" height="1263" fill={TOP} {...line} />
      <rect x="38" y="1092" width="1481" height="200" fill="#8398b6" {...line} />
      <rect x="79" y="58" width="1398" height="1004" fill="url(#floor)" {...line} />
      <rect x="79" y="58" width="1398" height="144" fill="url(#back)" {...line} />

      <g fill="url(#wall)" {...line}>
        <path d="M151 764V846A659 472 0 0 0 352 1062H545A659 472 0 0 1 151 764Z" />
        <path d="M1406 764V846A659 472 0 0 1 1208 1062H1010A659 472 0 0 0 1406 764Z" />
      </g>
      <path d="M580 170H978A659 472 0 0 1 1406 476V764A659 472 0 0 1 1010 1062H545A659 472 0 0 1 151 764V476A659 472 0 0 1 580 170Z" fill={TOP} {...line} />
      <ellipse cx="778" cy="619" rx="567" ry="408" fill="url(#wall)" {...line} />
      <g clipPath="url(#opening)">
        <ellipse cx="778" cy="680" rx="567" ry="408" fill={FLOOR} {...line} />
      </g>
      <ellipse cx="778" cy="619" rx="567" ry="408" fill="none" {...line} />

      <g {...line}>
        <path d="M355 583A423 304 0 0 1 733 315V374A423 304 0 0 0 355 643Z" fill="url(#wall)" />
        <path d="M313 583A466 335 0 0 1 733 284V315A423 304 0 0 0 355 583Z" fill={TOP} />
        <rect x="313" y="583" width="42" height="60" fill="#6c8ab6" />
        <path d="M1202 583A423 304 0 0 0 828 315V374A423 304 0 0 1 1202 643Z" fill="url(#wall)" />
        <path d="M1245 583A466 335 0 0 0 828 284V315A423 304 0 0 1 1202 583Z" fill={TOP} />
        <rect x="1203" y="583" width="42" height="60" fill="#6c8ab6" />
      </g>

      <g {...line}>
        <path d="M953 449A297 213 0 0 0 482 620V680A297 213 0 0 1 953 508Z" fill="url(#wall)" />
        <path d="M442 620A337 242 0 0 0 510 765V823A337 242 0 0 1 442 680Z" fill="url(#wall)" />
        <path d="M984 430A337 242 0 0 0 510 765L535 742A297 213 0 0 1 953 449Z" fill={TOP} />
        <path d="M953 449L984 430V485L953 508ZM510 765L535 742V800L510 823Z" fill="#7b94bd" />
        <path d="M1020 497A297 213 0 0 1 1075 620V645A297 213 0 0 0 1020 557Z" fill="url(#wall)" />
      </g>

      <g {...line}>
        <ellipse cx="778" cy="621" rx="165" ry="119" fill="url(#wall)" />
        <g clipPath="url(#core)">
          <ellipse cx="778" cy="681" rx="165" ry="119" fill={FLOOR} />
        </g>
        <ellipse cx="778" cy="678" rx="120" ry="87" fill="url(#hole)" />
        <path d="M573 621A206 148 0 0 0 731 765V822A206 148 0 0 1 573 680Z" fill="url(#wall)" />
        <path d="M985 621A206 148 0 0 1 820 765V822A206 148 0 0 0 985 680Z" fill="url(#wall)" />
        <path d="M731 765A206 148 0 1 1 820 765V735A165 119 0 1 0 731 735Z" fill={TOP} />
        <path d="M731 826H820" fill="none" />
      </g>

      <g {...line}>
        <path d="M1115 620A337 242 0 0 1 574 813V873A337 242 0 0 0 1115 680Z" fill="url(#wall)" />
        <path d="M1048 476A337 242 0 0 1 574 811L602 791A297 213 0 0 0 1020 497Z" fill={TOP} />
        <path d="M313 655A466 335 0 0 0 731 952V1012A466 335 0 0 1 313 715Z" fill="url(#wall)" />
        <path d="M313 655A466 335 0 0 0 731 952V925A423 304 0 0 1 355 655Z" fill={TOP} />
        <path d="M1245 655A466 335 0 0 1 825 952V1012A466 335 0 0 0 1245 715Z" fill="url(#wall)" />
        <path d="M1245 655A466 335 0 0 1 825 952V925A423 304 0 0 0 1202 655Z" fill={TOP} />
      </g>
      <path d="M313 656V713M1245 656V713M1115 620V645" stroke="#0c1420" strokeWidth="3" />
    </svg>
  );
}

function ViewCube() {
  return (
    <svg viewBox="0 0 420 360" className="ml-auto h-[120px] w-[140px] shrink-0" role="img" aria-label="View cube">
      <path d="M125 77H284L298 188H113Z" fill="#e4e4e4" stroke="#a5a5a5" strokeWidth="3" />
      <path d="M113 190H298L284 302H125Z" fill="#dadada" stroke="#b5b5b5" strokeWidth="3" />
      <path d="M108 189H300" stroke="#757575" strokeWidth="3" />
      <path d="M126 307H312" stroke="#f27f7f" strokeWidth="7" />
      <path d="M108 172L126 307" stroke="#4a48e0" strokeWidth="8" />
      <g fontFamily="Liberation Sans, sans-serif" textAnchor="middle">
        <text x="206" y="143" fontSize="34" fontWeight="bold" fill="#9c9ea2">FRONT</text>
        <text x="0" y="0" fontSize="34" fontWeight="bold" fill="#a6a8ab" transform="translate(204 238) rotate(180)">BOTTOM</text>
        <text x="103" y="164" fontSize="46" fill="#8d8df0">Z</text>
        <text x="333" y="321" fontSize="42" fill="#f09090">X</text>
      </g>
    </svg>
  );
}

/* ---------- bottom strip ---------- */

function NavIcon({ label, caret, className = "", children }: { label: string; caret?: string; className?: string; children: ReactNode }) {
  return (
    <button aria-label={label} className={`flex items-center ${className}`}>
      <svg viewBox="0 0 21 21" className="h-[21px] w-[21px]" fill="none" stroke="#4a4d52" strokeWidth="1.400">
        {children}
      </svg>
      {caret && <span className={caret}><Caret /></span>}
    </button>
  );
}

function BottomStrip() {
  return (
    <div className="flex h-[37px] shrink-0 pl-[5px]">
      <div className="flex h-[31px] w-[375px] items-center border border-t-0 border-[#c6c6c6] bg-[#f1f1f1] pr-[2px] pl-[30px]">
        <h2 className="text-[12px] leading-4 text-[#6c6c6c]">COMMENTS</h2>
        <button aria-label="Add comment" className="ml-auto"><RoundSign plus /></button>
        <PanelGrip />
      </div>
      <div className="mt-0.5 ml-[451px] flex h-[30px] w-[296px] items-center bg-[#f1f1f1] pl-1">
        <NavIcon label="Orbit" caret="ml-[6px]">
          <path d="M6 5Q8 .5 10.500 1Q14 3 14 11Q13 19 10 20Q6 19 6 10" />
          <path d="M14 7Q20 9 19 11Q16 15 10 15Q1 14 1 10.500Q2 7 7 7" />
          <path d="M10 4V11M7 8.500H13" stroke="#4b87c8" strokeWidth="1.800" />
          <path d="M15 15L20 14L17 10Z" fill="#4a4d52" stroke="none" />
        </NavIcon>
        <NavIcon label="Look at" className="ml-[6px]">
          <path d="M1 8H20V20H1ZM1 7L7 1V4L15 2V7" fill="#fff" />
          <path d="M5 11.500H16V17H5Z" fill="#aab0ba" />
        </NavIcon>
        <NavIcon label="Pan" className="ml-3">
          <path d="M7 20Q6 16 1.500 12Q1 10 3 10L6 12L4 5Q5 3 6.500 5L8.500 9L8 2.500Q9.500 .5 10.500 2.500L11.500 8.500L12.500 2.500Q14 1 15 3L14.500 9L17 5Q18.500 4 19 6L17 14Q17 17 15.500 20Z" fill="#fff" />
        </NavIcon>
        <NavIcon label="Zoom" className="ml-3">
          <circle cx="7.500" cy="8" r="6" fill="#e9f2f4" />
          <path d="M12 13L17 19" strokeWidth="3.500" />
          <path d="M15 4H21M18 1V7M15 9H21" />
        </NavIcon>
        <NavIcon label="Fit" caret="ml-[6px]" className="ml-[11px]">
          <path d="M1 1H20V20H1Z" strokeDasharray="3 2" />
          <circle cx="9.500" cy="9" r="7.500" fill="#e9f2f4" />
          <path d="M15 14L19 19" strokeWidth="3.500" />
        </NavIcon>
        <NavIcon label="Display settings" caret="ml-[2px]" className="ml-[6px]">
          <path d="M1 1.500H20V16H1ZM7 19.500H15M11 16V19" fill="#fff" />
          <path d="M4.500 4H16.500V13.500H4.500Z" fill="#9db8e4" />
        </NavIcon>
        <NavIcon label="Grid settings" caret="ml-[2px]" className="ml-[9px]">
          <path d="M1 1H20V20H1ZM4.800 1V20M8.600 1V20M12.400 1V20M16.200 1V20M1 4.800H20M1 8.600H20M1 12.400H20M1 16.200H20" strokeWidth="1.100" fill="#fff" />
        </NavIcon>
        <NavIcon label="Viewports" caret="ml-[2px]" className="ml-2">
          <path d="M1 2.500H9.500V10H1ZM11 2.500H19.500V10H11ZM1 11.500H9.500V19H1ZM11 11.500H19.500V19H11Z" fill="#a9c0e6" />
        </NavIcon>
      </div>
      <p className="mt-[9px] mr-[23px] ml-auto text-[13px] leading-4 font-bold text-[#444]">Body3</p>
    </div>
  );
}

/* ---------- timeline ---------- */

type Feature = "sketch" | "extrude" | "shellbox" | "combine" | "move" | "mirror" | "revolve" | "scale" | "copy";

function FeatureIcon({ kind }: { kind: Feature }) {
  return (
    <svg viewBox="0 0 20 21" className="h-[21px] w-5" aria-hidden="true">
      {kind === "sketch" && (
        <g>
          <path d="M4 2H16M2 4V16M4 18.500H10M17.500 4V9" stroke="#4a4a4a" strokeWidth="1.300" />
          <path d="M.5 .5H3.500V3.500H.5ZM16 .5H19V3.500H16ZM.5 17H3.500V20H.5Z" fill="#2f8ad8" />
          <path d="M11 20.500L12 16L16.500 11L20 14L15 19Z" fill="#f9b94e" />
          <path d="M16.500 11L18 9.500L20.500 12L20 14Z" fill="#f25a5a" />
          <path d="M11 20.500L12 17.500L14 19.500Z" fill="#555" />
        </g>
      )}
      {kind === "extrude" && (
        <g>
          <path d="M1 16H11L15 13V17L12 20.500H1Z" fill="#a9a9a9" />
          <path d="M0 5L4 1H15V13L12 17H0Z" fill="#3f8dca" stroke="#3b7fb5" strokeWidth=".5" />
          <path d="M0 5H12V17H0Z" fill="#62ade4" />
          <path d="M0 5L4 1H15L12 5Z" fill="#86c7f5" />
          <path d="M18 16V3" stroke="#222" strokeWidth="1.400" />
          <path d="M16 5L18 1L20 5Z" fill="#222" />
        </g>
      )}
      {kind === "shellbox" && (
        <g>
          <path d="M1 6L5 1H19V16L15 20H1Z" fill="#b3b5b8" stroke="#6a6a6a" strokeWidth="1.300" />
          <path d="M1.500 6L5 1.500H18.500L15 6Z" fill="#f2f2f2" />
          <path d="M1.500 6H15V19.500H1.500Z" fill="#d7d8d9" />
        </g>
      )}
      {kind === "combine" && (
        <g>
          <path d="M0 9L3 6H6V4L9 0H20V11L17 14H14V17L11 20H0Z" fill="#3f8dca" />
          <path d="M0 9H7V4H17V14H11V20H0Z" fill="#62ade4" />
          <path d="M7 4L9.500 .5H20L17 4Z" fill="#86c7f5" />
        </g>
      )}
      {kind === "move" && (
        <g>
          <path d="M10 3V18M3 10.500H17" stroke="#333" strokeWidth="1.600" />
          <path d="M7 5L10 1L13 5ZM7 16L10 20L13 16ZM5 7.500L1 10.500L5 13.500ZM15 7.500L19 10.500L15 13.500Z" fill="#333" />
        </g>
      )}
      {kind === "mirror" && (
        <g>
          <path d="M1 18Q1 8 8 4V15L5 19Z" fill="#cfe7d6" stroke="#4f8f66" />
          <path d="M12 5Q19 3 19 10V16L12 19Z" fill="#56c37c" stroke="#4f8f66" />
          <path d="M8 6L13 1V15L8 20Z" fill="#e8965f" />
        </g>
      )}
      {kind === "revolve" && (
        <g>
          <path d="M0 9Q10 2 20 9V16L15 20Q10 15 5 20L0 16Z" fill="#62ade4" />
          <path d="M0 9Q10 2 20 9L15 13Q10 9 5 13Z" fill="#86c7f5" />
          <path d="M2 4Q10 -1 18 4" fill="none" stroke="#333" strokeWidth="1.300" />
          <path d="M0 5L2 1L5 4Z" fill="#222" />
        </g>
      )}
      {kind === "scale" && (
        <g>
          <path d="M0 1H20V20H11V8H0Z" fill="#4b9fdd" />
          <rect x="1" y="10" width="9" height="10" fill="#f4f4f4" stroke="#666" strokeWidth="1.300" />
        </g>
      )}
      {kind === "copy" && (
        <g fill="#f6f6f6" stroke="#555" strokeWidth="1.300">
          <rect x="1" y="1" width="7.500" height="10" rx="3" />
          <rect x="11.500" y="9.500" width="7.500" height="10.500" rx="3" />
          <path d="M3 13V17H8M6 15L8 17L6 19" fill="none" stroke="#2f7fd0" />
        </g>
      )}
    </svg>
  );
}

const groups: { color: string; features: Feature[] }[] = [
  { color: "bg-[#fdaeb2]", features: ["sketch", "extrude", "extrude", "extrude", "extrude", "sketch", "sketch", "shellbox"] },
  { color: "bg-[#fdd57a]", features: ["combine", "extrude", "sketch", "extrude", "sketch", "extrude", "extrude", "sketch", "extrude"] },
  { color: "bg-[#fdaeb2]", features: ["shellbox"] },
  { color: "bg-[#69dede]", features: ["combine"] },
  { color: "bg-[#fdd57a]", features: ["move"] },
  { color: "bg-[#fdaeb2]", features: ["sketch"] },
  { color: "bg-[#fdd57a]", features: ["mirror", "sketch", "sketch", "revolve", "scale", "copy"] },
  { color: "bg-[#fdaeb2]", features: ["sketch"] },
  { color: "bg-[#fdd57a]", features: ["extrude"] },
];

const controls = [
  { label: "Go to start", d: "M0 0H2.500V17H0ZM16 0V17L3 8.500Z" },
  { label: "Step back", d: "M12 1V16L0 8.500ZM13 5H16V12H13Z" },
  { label: "Play", d: "M1 -1V18L15 8.500Z" },
  { label: "Step forward", d: "M4 1V16L16 8.500ZM0 5H3V12H0Z" },
  { label: "Go to end", d: "M13.500 0H16V17H13.500ZM0 0V17L13 8.500Z" },
];

function Timeline() {
  return (
    <footer className="flex h-[62px] shrink-0 border-t-3 border-[#cfcfcf] bg-[#f1f1f1]">
      <div className="flex h-[58px] w-[167px] shrink-0 items-center gap-[15px] pl-[13px]">
        {controls.map((c) => (
          <button key={c.label} aria-label={c.label}>
            <svg viewBox="0 0 16 17" className="h-[17px] w-4 overflow-visible" fill="#444">
              <path d={c.d} />
            </svg>
          </button>
        ))}
      </div>
      <div className="flex pt-2 pl-[13px]">
        {groups.map((g, gi) => (
          <div key={gi}>
            <div className={`relative mr-[5px] h-2 ${g.color}`}>
              {gi === 0 && (
                <svg viewBox="0 0 20 7" className="absolute -top-px right-[3px] h-[7px] w-5" stroke="#333" strokeWidth="2.200" aria-hidden="true">
                  <path d="M1 6L6 1M8 6L13 1M14 6L19 1" />
                </svg>
              )}
            </div>
            <ol className="flex">
              {g.features.map((f, i) => {
                const first = gi === 0 && i === 0;
                const last = gi === groups.length - 1;
                return (
                  <li key={i} className="w-[30px]">
                    <button aria-label={f} className="mt-[2px] block h-[21px] pl-[2px]">
                      <FeatureIcon kind={f} />
                    </button>
                    <span className="mt-[3px] flex h-2">
                      <span className={first ? "w-3" : "w-3 border-b-2 border-[#cfcfcf]"} />
                      <span className="w-0.5 bg-[#cfcfcf]" />
                      <span className={last ? "flex-1" : "flex-1 border-b-2 border-[#cfcfcf]"} />
                    </span>
                  </li>
                );
              })}
            </ol>
          </div>
        ))}
        <svg viewBox="0 0 16 40" className="mt-[3px] -ml-[10px] h-10 w-4" aria-hidden="true">
          <path d="M1 0H15V6L9 11V40H7V11L1 6Z" fill="#666" />
        </svg>
      </div>
      <button aria-label="Timeline settings" className="mr-4 ml-auto">
        <Gear />
      </button>
    </footer>
  );
}

export default function App() {
  return (
    <div className={`flex min-h-screen flex-col bg-[#fefefe] ${ARIAL}`}>
      <TitleBar />
      <AppBar />
      <Ribbon />
      <main className="relative flex flex-1">
        <Browser />
        <div className="flex flex-1 items-start">
          <div className="pt-[158px] pl-[140px]">
            <Model />
          </div>
          <div className="ml-auto pt-2">
            <ViewCube />
          </div>
        </div>
        <ContextMenu />
      </main>
      <BottomStrip />
      <Timeline />
    </div>
  );
}
